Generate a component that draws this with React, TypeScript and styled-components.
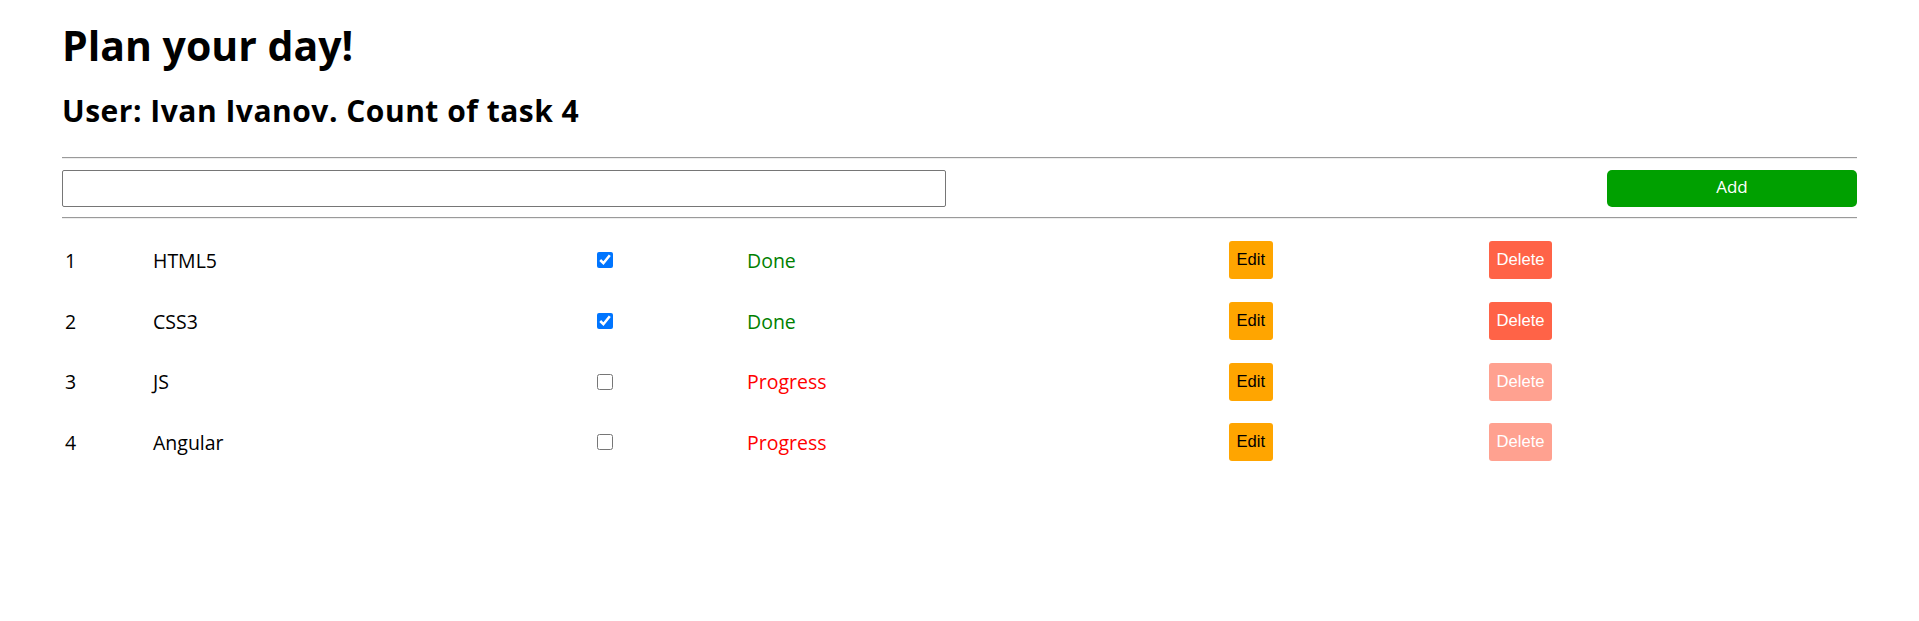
import React, { useState } from 'react';
import styled, { createGlobalStyle } from 'styled-components';

interface Task {
  id: number;
  title: string;
  done: boolean;
}

const GlobalStyle = createGlobalStyle`
  body {
    margin: 0;
    background: #fff;
    color: #000;
    font-family: "Open Sans", "Noto Sans", sans-serif;
  }
`;

const Page = styled.div`
  padding: 0 62px;
`;

const Title = styled.h1`
  margin: 0;
  padding-top: 21px;
  font-size: 41px;
  line-height: 49px;
  font-weight: 700;
`;

const SubTitle = styled.h2`
  margin: 0;
  padding-top: 23.4px;
  font-size: 30px;
  line-height: 36px;
  letter-spacing: 0.5px;
  font-weight: 700;
`;

const Divider = styled.hr<{ $top: number }>`
  margin: ${({ $top }) => $top}px 0 0;
  height: 0;
  border: none;
  border-top: 1px solid #9a9a9a;
  border-bottom: 1px solid #eeeeee;
`;

const AddRow = styled.form`
  display: flex;
  justify-content: space-between;
  align-items: center;
  margin-top: 11px;
  margin-bottom: 10px;
`;

const TaskInput = styled.input`
  width: 884px;
  height: 37px;
  box-sizing: border-box;
  border: 1px solid #767676;
  border-radius: 2px;
  padding: 0 4px;
  font-size: 17px;
  font-family: "Open Sans", sans-serif;
`;

const AddButton = styled.button`
  width: 250px;
  height: 37px;
  padding: 0 0 3px;
  border: none;
  border-radius: 5px;
  background: #00a000;
  color: #fff;
  font-family: "Open Sans", sans-serif;
  font-size: 17px;
  cursor: pointer;
`;

const List = styled.div`
  margin-top: 11px;
`;

const Row = styled.div`
  display: grid;
  grid-template-columns: 88px 444px 150px 482px 260px 1fr;
  align-items: center;
  height: 60.7px;
  font-size: 19.5px;
`;

const Cell = styled.div`
  padding-left: 3px;
`;

const CheckBox = styled.input`
  display: block;
  width: 16px;
  height: 16px;
  margin: 0;
  accent-color: #0075ff;
`;

const Status = styled.span<{ $done: boolean }>`
  color: ${({ $done }) => ($done ? '#008000' : '#ff0000')};
`;

const ActionButton = styled.button<{ $kind: 'edit' | 'delete'; $faded?: boolean }>`
  display: block;
  height: 38px;
  padding: 0 7.5px;
  border: none;
  border-radius: 3px;
  font-family: "Liberation Sans", Arial, sans-serif;
  font-size: 16.6px;
  background: ${({ $kind }) => ($kind === 'edit' ? '#ffa500' : '#ff6347')};
  color: ${({ $kind }) => ($kind === 'edit' ? '#000' : '#fff')};
  opacity: ${({ $faded }) => ($faded ? 0.6 : 1)};
  cursor: pointer;
`;

const initialTasks: Task[] = [
  { id: 1, title: 'HTML5', done: true },
  { id: 2, title: 'CSS3', done: true },
  { id: 3, title: 'JS', done: false },
  { id: 4, title: 'Angular', done: false },
];

const App: React.FC = () => {
  const [tasks, setTasks] = useState<Task[]>(initialTasks);
  const [text, setText] = useState('');

  const toggle = (id: number) => {
    setTasks(tasks.map((t) => (t.id === id ? { ...t, done: !t.done } : t)));
  };

  const handleAdd = (e: React.FormEvent<HTMLFormElement>) => {
    e.preventDefault();
  };

  return (
    <Page>
      <GlobalStyle />
      <Title>Plan your day!</Title>
      <SubTitle>User: Ivan Ivanov. Count of task {tasks.length}</SubTitle>
      <Divider $top={27.6} />
      <AddRow onSubmit={handleAdd}>
        <TaskInput value={text} onChange={(e) => setText(e.target.value)} />
        <AddButton type="submit">Add</AddButton>
      </AddRow>
      <Divider $top={0} />
      <List>
        {tasks.map((task) => (
          <Row key={task.id}>
            <Cell>{task.id}</Cell>
            <Cell>{task.title}</Cell>
            <Cell>
              <CheckBox type="checkbox" checked={task.done} onChange={() => toggle(task.id)} />
            </Cell>
            <Cell>
              <Status $done={task.done}>{task.done ? 'Done' : 'Progress'}</Status>
            </Cell>
            <Cell>
              <ActionButton $kind="edit">Edit</ActionButton>
            </Cell>
            <Cell>
              <ActionButton $kind="delete" $faded={!task.done}>Delete</ActionButton>
            </Cell>
          </Row>
        ))}
      </List>
    </Page>
  );
};

export default App;
